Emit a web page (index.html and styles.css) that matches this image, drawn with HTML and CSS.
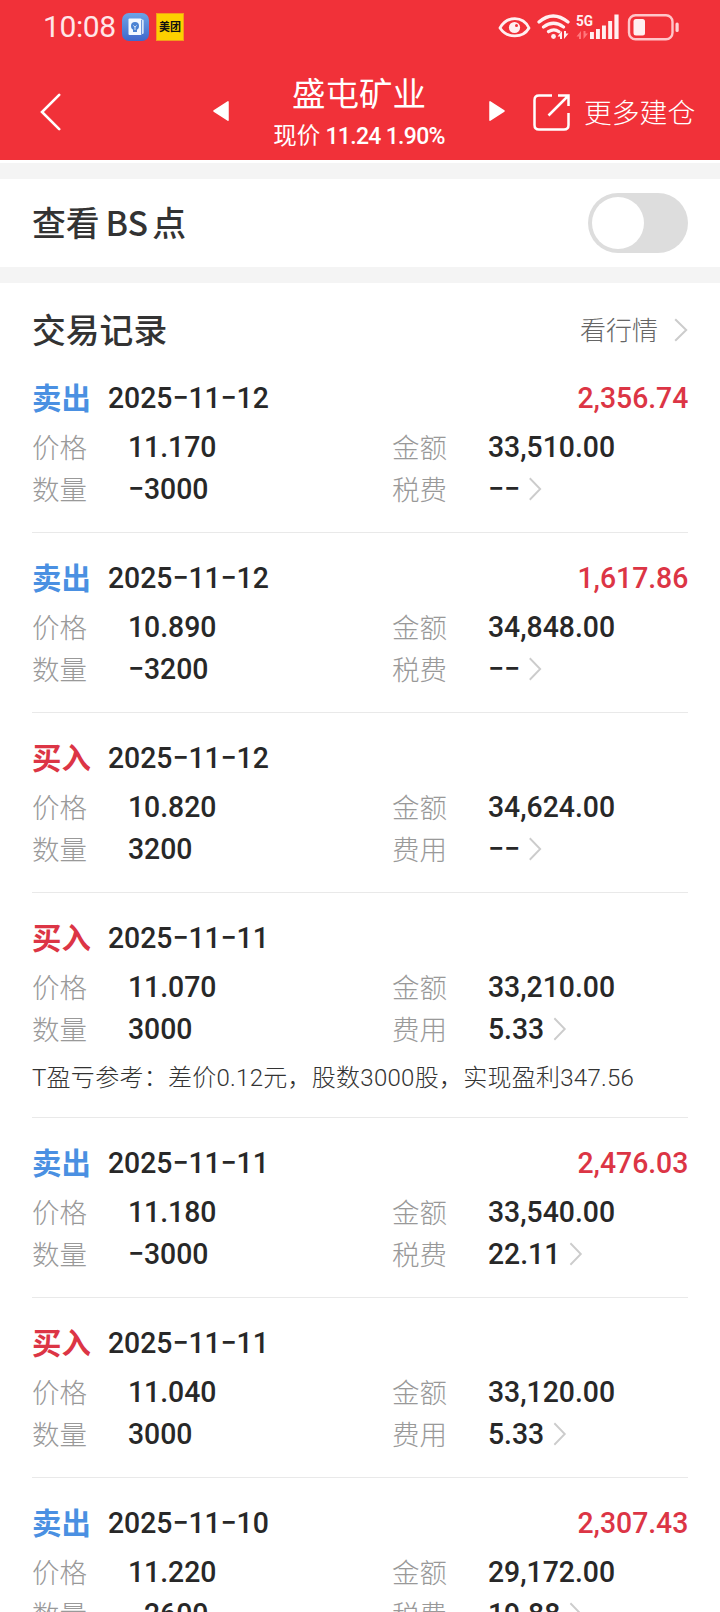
FILE: index.html
```html
<!DOCTYPE html>
<html lang="zh-CN">
<head>
<meta charset="utf-8">
<title>盛屯矿业</title>
<link rel="stylesheet" href="styles.css">
</head>
<body>
<svg class="defs" width="0" height="0"><symbol id="chev" viewBox="0 0 14 24"><path d="M1.2 1.2 12.2 12 1.2 22.8" fill="none" stroke="#ccc" stroke-width="2"/></symbol></svg>
<div class="screen">
<header class="top">
  <div class="status">
    <span class="clock">10:08</span>
    <svg class="app" width="27" height="28" viewBox="0 0 27 28"><defs><linearGradient id="ag" x1="0" y1="0" x2="0" y2="1"><stop offset="0" stop-color="#6ea3e6"/><stop offset="1" stop-color="#3f68cc"/></linearGradient></defs><rect width="27" height="28" rx="7" fill="url(#ag)"/><path d="M18 6.500h2.500q1.200 0 1.200 1.200v12q0 1.200-1.200 1.200H18z" fill="#d5e4f8"/><rect x="6.500" y="5.500" width="13" height="16.500" rx="1" fill="#f3f9ff"/><path d="M19.500 7v14" stroke="#4e7dd0" stroke-width=".8"/><circle cx="13" cy="13" r="4" fill="#4b83d3"/><path d="M11 16h4v3h-4z" fill="#4b83d3"/><path d="M11.300 12.500 13 14l1.700-1.500M13 14v3" stroke="#d5e6fb" fill="none"/></svg>
    <span class="meituan">美团</span>
    <svg class="sys" width="184" height="28" viewBox="0 0 184 28">
      <g fill="none" stroke="#fff0f1">
        <path d="M2 15C9 2.500 25 2.500 31 15 25 25.500 9 25.500 2 15Z" stroke-width="2.800" stroke-linejoin="round"/>
        <path d="M41 9q14-12 29 0M45.500 14q10-7.500 20 0M50.500 18.700q5.500-3.700 10.500 0" stroke-width="3.200" stroke-linecap="round"/>
        <rect x="131" y="2.200" width="43.500" height="24" rx="6.500" stroke-width="2.400" stroke="#ffc6c9"/>
      </g>
      <circle cx="16.500" cy="14.500" r="5.600" fill="#fff0f1"/><circle cx="18.500" cy="12.500" r="1.500" fill="#f13139"/>
      <circle cx="55.500" cy="23.500" r="2.400" fill="#fff0f1"/>
      <path d="M64 18v8h-2v-2.500h-2.500zM66 26v-8h2v2.500h2.500z" fill="#fff0f1"/>
      <path d="M83 18v8h-2v-2.500h-2.500zM85.500 26v-8h2v2.500h2.500z" fill="#ff777c"/>
      <text x="78" y="12.500" textLength="17" lengthAdjust="spacingAndGlyphs" class="fiveg">5G</text>
      <path d="M92 19h3.900v7H92zM98 16h3.900v10H98zM104 12.500h3.900V26H104zM110.200 8h3.900v18h-3.900zM116.400 1.500h4.200V26h-4.200z" fill="#fff0f1"/>
      <rect x="135.500" y="6" width="11.500" height="16.500" rx="2.500" fill="#fff0f1"/><rect x="177.500" y="9.500" width="3.200" height="9.500" rx="1.500" fill="#ffd2d4"/>
    </svg>
  </div>
  <nav class="nav">
    <svg class="back" width="22" height="38" viewBox="0 0 22 38"><path d="M19.200 1.800 2 19l17.200 17.200" fill="none" stroke="#fff" stroke-width="2.600" stroke-linecap="round"/></svg>
    <svg class="prev" width="16" height="20" viewBox="0 0 16 20"><path d="M15 .8v18.400L1 10Z" fill="#fff" stroke="#fff" stroke-width="1.500" stroke-linejoin="round"/></svg>
    <div class="stock"><div class="name">盛屯矿业</div><div class="quote">现价 <span class="num">11.24 1.90%</span></div></div>
    <svg class="next" width="16" height="20" viewBox="0 0 16 20"><path d="M1 .8v18.400L15 10Z" fill="#fff" stroke="#fff" stroke-width="1.500" stroke-linejoin="round"/></svg>
    <svg class="share" width="37" height="37" viewBox="0 0 37 37"><g fill="none" stroke="#fff" stroke-width="2.500"><path d="M19 1.500H6Q1.500 1.500 1.500 6v25q0 4.500 4.500 4.500h25q4.500 0 4.500-4.500V19"/><path d="M15.500 21.500 35 2M25 1.500h10.500V12"/></g></svg>
    <span class="more">更多建仓</span>
  </nav>
</header>
<section class="bs"><h2>查看<span class="latin">BS</span>点</h2><div class="toggle"><i></i></div></section>
<section class="records">
  <div class="head"><h2>交易记录</h2><span class="market">看行情</span><svg class="chev"><use href="#chev"/></svg></div>

  <article class="item"><div class="title"><b class="sell">卖出</b><span class="num">2025−11−12</span><span class="num profit">2,356.74</span></div>
  <div class="row"><label>价格</label><span class="num">11.170</span><label>金额</label><span class="num">33,510.00</span></div>
  <div class="row second"><label>数量</label><span class="num">−3000</span><label>税费</label><span class="num">−−<svg class="chev"><use href="#chev"/></svg></span></div></article>

  <article class="item"><div class="title"><b class="sell">卖出</b><span class="num">2025−11−12</span><span class="num profit">1,617.86</span></div>
  <div class="row"><label>价格</label><span class="num">10.890</span><label>金额</label><span class="num">34,848.00</span></div>
  <div class="row second"><label>数量</label><span class="num">−3200</span><label>税费</label><span class="num">−−<svg class="chev"><use href="#chev"/></svg></span></div></article>

  <article class="item"><div class="title"><b class="buy">买入</b><span class="num">2025−11−12</span></div>
  <div class="row"><label>价格</label><span class="num">10.820</span><label>金额</label><span class="num">34,624.00</span></div>
  <div class="row second"><label>数量</label><span class="num">3200</span><label>费用</label><span class="num">−−<svg class="chev"><use href="#chev"/></svg></span></div></article>

  <article class="item"><div class="title"><b class="buy">买入</b><span class="num">2025−11−11</span></div>
  <div class="row"><label>价格</label><span class="num">11.070</span><label>金额</label><span class="num">33,210.00</span></div>
  <div class="row second"><label>数量</label><span class="num">3000</span><label>费用</label><span class="num">5.33<svg class="chev"><use href="#chev"/></svg></span></div>
  <p class="note">T盈亏参考：差价0.12元，股数3000股，实现盈利347.56</p></article>

  <article class="item"><div class="title"><b class="sell">卖出</b><span class="num">2025−11−11</span><span class="num profit">2,476.03</span></div>
  <div class="row"><label>价格</label><span class="num">11.180</span><label>金额</label><span class="num">33,540.00</span></div>
  <div class="row second"><label>数量</label><span class="num">−3000</span><label>税费</label><span class="num">22.11<svg class="chev"><use href="#chev"/></svg></span></div></article>

  <article class="item"><div class="title"><b class="buy">买入</b><span class="num">2025−11−11</span></div>
  <div class="row"><label>价格</label><span class="num">11.040</span><label>金额</label><span class="num">33,120.00</span></div>
  <div class="row second"><label>数量</label><span class="num">3000</span><label>费用</label><span class="num">5.33<svg class="chev"><use href="#chev"/></svg></span></div></article>

  <article class="item"><div class="title"><b class="sell">卖出</b><span class="num">2025−11−10</span><span class="num profit">2,307.43</span></div>
  <div class="row"><label>价格</label><span class="num">11.220</span><label>金额</label><span class="num">29,172.00</span></div>
  <div class="row second"><label>数量</label><span class="num">−2600</span><label>税费</label><span class="num">19.88<svg class="chev"><use href="#chev"/></svg></span></div></article>
</section>
</div>
</body>
</html>
```
FILE: styles.css
```css
* { box-sizing: border-box; }
html, body { margin: 0; height: 1612px; overflow: hidden; }
body { background: #fff; color: #333; font-family: "Noto Sans CJK SC", sans-serif; }
.defs { display: none; }
svg { display: block; flex: none; }
.screen { width: 720px; height: 1612px; overflow: hidden; }
.num { font-family: Roboto, "Noto Sans CJK SC", sans-serif; font-weight: 500; white-space: nowrap; }

.top { height: 163px; background: #f13139; border-bottom: 3px solid #fff; color: #fff; }
.status { height: 56px; display: flex; align-items: center; padding: 0 38px 2px 43px; }
.clock { font: 400 30px/54px Roboto, sans-serif; letter-spacing: -.4px; color: #ffe6e8; width: 79px; }
.meituan { width: 28px; height: 28px; margin-left: 7px; background: #fdd000; border: 1px solid #f39c1a; color: #111; font-size: 11px; font-weight: 700; line-height: 25px; text-align: center; white-space: nowrap; }
.sys { margin-left: auto; }
.fiveg { font: 700 15px Roboto, sans-serif; fill: #fff0f1; }
.nav { height: 104px; display: flex; align-items: center; padding-left: 40px; }
.back { margin-top: 8px; }
.prev { margin: 6px 0 0 151px; }
.next { margin-top: 6px; }
.stock { width: 260px; padding-top: 12px; text-align: center; }
.name { font-size: 33.500px; line-height: 42px; }
.quote { font-size: 23.500px; line-height: 42px; white-space: nowrap; }
.quote .num { font-size: 23px; letter-spacing: -.7px; }
.share { margin: 8px 0 0 28px; }
.more { margin: 6px 0 0 14px; font-size: 27.800px; line-height: 40px; font-weight: 300; white-space: nowrap; }

h2 { margin: 0; padding-bottom: 2px; font-size: 33.800px; font-weight: 500; line-height: 46px; }
.bs { height: 120px; padding: 0 32px; border: solid #f4f4f4; border-width: 16px 0; display: flex; align-items: center; justify-content: space-between; }
.latin { margin: 0 4px 0 6px; }
.toggle { width: 100px; height: 60px; padding: 4px; border-radius: 30px; background: #ddd; }
.toggle i { display: block; width: 52px; height: 52px; border-radius: 50%; background: #fff; }

.records { padding: 0 32px; }
.head { height: 70px; padding-top: 24px; display: flex; align-items: center; }
.market { margin: 0 16px 0 auto; padding-bottom: 2px; color: #666; font-size: 26px; line-height: 38px; font-weight: 300; }
.chev { width: 14px; height: 24px; }
.item { padding: 24px 0 22px; border-bottom: 1px solid #e9e9e9; }
.title { height: 42px; margin-bottom: 8px; display: flex; align-items: center; }
.title b { width: 76px; padding-bottom: 3px; font-size: 29.400px; line-height: 39px; font-weight: 700; }
.title .num, .row .num { font-size: 30px; line-height: 42px; color: #282828; transform: scaleX(.945); transform-origin: 0 50%; }
.title .num.profit { margin-left: auto; color: #dc3545; transform-origin: 100% 50%; }
.sell { color: #4a90e2; }
.buy { color: #dc3545; }
.row { height: 42px; display: grid; grid-template-columns: 96px 264px 96px 1fr; align-items: center; }
.second { height: 41px; }
.row .num { padding-bottom: 2px; line-height: 40px; display: flex; align-items: center; }
.row label { padding-bottom: 4px; color: #999; font-size: 27.500px; line-height: 37px; font-weight: 300; }
.row .chev { margin-left: 9px; }
.note { margin: 0; padding-top: 11px; font-family: Roboto, "Noto Sans CJK SC", sans-serif; font-size: 24px; line-height: 34px; letter-spacing: .27px; font-weight: 300; color: #333; white-space: nowrap; }
```
